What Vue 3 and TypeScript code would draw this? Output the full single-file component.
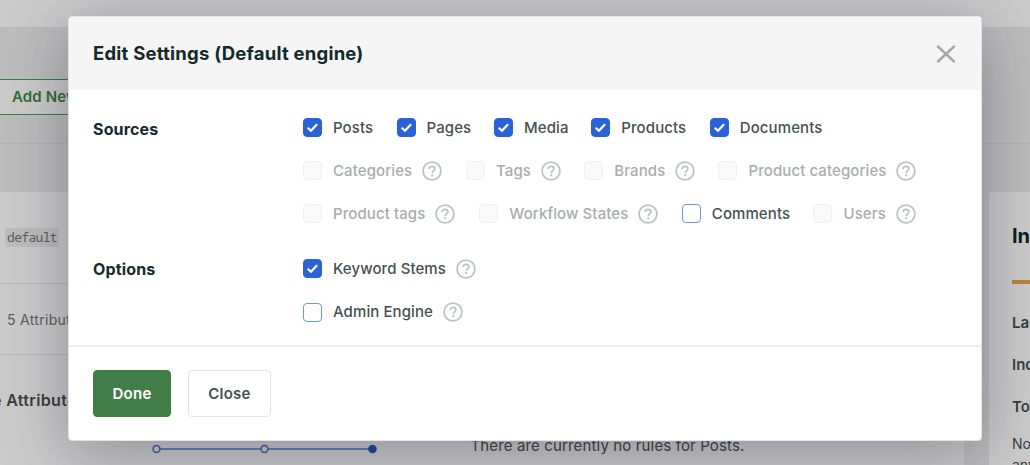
<script setup lang="ts">
interface Option {
  label: string
  checked?: boolean
  disabled?: boolean
  help?: boolean
  width: number
}

const sources: Option[][] = [
  [
    { label: 'Posts', checked: true, width: 93.5 },
    { label: 'Pages', checked: true, width: 97.5 },
    { label: 'Media', checked: true, width: 97.3 },
    { label: 'Products', checked: true, width: 118.5 },
    { label: 'Documents', checked: true, width: 120 },
  ],
  [
    { label: 'Categories', disabled: true, help: true, width: 163 },
    { label: 'Tags', disabled: true, help: true, width: 118.3 },
    { label: 'Brands', disabled: true, help: true, width: 134.2 },
    { label: 'Product categories', disabled: true, help: true, width: 200 },
  ],
  [
    { label: 'Product tags', disabled: true, help: true, width: 176.3 },
    { label: 'Workflow States', disabled: true, help: true, width: 202.5 },
    { label: 'Comments', width: 131.7 },
    { label: 'Users', disabled: true, help: true, width: 110 },
  ],
]

const options: Option[][] = [
  [{ label: 'Keyword Stems', checked: true, help: true, width: 200 }],
  [{ label: 'Admin Engine', help: true, width: 200 }],
]

const groups = [
  { title: 'Sources', rows: sources },
  { title: 'Options', rows: options },
]
</script>

<template>
  <div class="screen">
    <div class="page">
      <div class="topbar"></div>
      <div class="toolbar"><button class="add">Add New</button></div>
      <div class="columns">
        <main class="card engine">
          <div class="slug"><code>default</code></div>
          <div class="count">5 Attributes</div>
          <h3>e Attributes</h3>
          <div class="rules">
            <svg class="slider" width="226" height="12" viewBox="0 0 226 12" fill="none">
              <path d="M9 6H110M117 6H220" stroke="#4a68ac" stroke-width="1.7" />
              <circle cx="5.5" cy="6" r="3.4" stroke="#3c5ca3" stroke-width="1.5" />
              <circle cx="113.5" cy="6" r="3.4" stroke="#3c5ca3" stroke-width="1.5" />
              <circle cx="221.5" cy="6" r="4.3" fill="#204795" />
            </svg>
            <span>There are currently no rules for Posts.</span>
          </div>
        </main>
        <aside class="card stats">
          <h2>Index</h2>
          <div class="progress"></div>
          <b>Last</b>
          <b>Indexed</b>
          <b>Total</b>
          <p>Note<br />any</p>
        </aside>
      </div>
    </div>

    <section class="modal" role="dialog">
      <header>
        <h1>Edit Settings (Default engine)</h1>
        <svg class="dismiss" width="20" height="20" viewBox="0 0 20 20">
          <path d="M2 2.5L18 17.5M18 2.5L2 17.5" stroke="#a5a7a8" stroke-width="2.4" stroke-linecap="round" />
        </svg>
      </header>
      <div class="body">
        <div v-for="group in groups" :key="group.title" class="group">
          <h2>{{ group.title }}</h2>
          <div class="rows">
            <div v-for="(row, i) in group.rows" :key="i" class="row">
              <div
                v-for="item in row"
                :key="item.label"
                class="item"
                :class="{ disabled: item.disabled }"
                :style="{ width: item.width + 'px' }"
              >
                <span class="box" :class="{ checked: item.checked }">
                  <svg v-if="item.checked" width="19" height="19" viewBox="0 0 19 19" fill="none">
                    <path d="M4.7 9.8L7.9 12.7L14.1 6.3" stroke="#fff" stroke-width="2.2" />
                  </svg>
                </span>
                <span class="label">{{ item.label }}</span>
                <svg v-if="item.help" class="help" width="20" height="20" viewBox="0 0 20 20" fill="none">
                  <circle cx="10" cy="10" r="8.9" stroke="#bec3c1" stroke-width="1.8" />
                  <path
                    d="M7.1 8C7.1 6.2 8.3 5.3 10 5.3C11.7 5.3 12.9 6.3 12.9 7.8C12.9 9.5 10.3 9.8 10.3 12"
                    stroke="#bec3c1"
                    stroke-width="1.7"
                  />
                  <circle cx="10.2" cy="14.2" r="1.1" fill="#bec3c1" />
                </svg>
              </div>
            </div>
          </div>
        </div>
      </div>
      <footer>
        <button class="primary">Done</button>
        <button class="secondary">Close</button>
      </footer>
    </section>
  </div>
</template>

<style>
body {
  margin: 0;
  overflow: hidden;
}
</style>

<style scoped>
* {
  box-sizing: border-box;
}
h1, h2, h3, p {
  margin: 0;
}
.screen {
  position: relative;
  width: 1030px;
  height: 465px;
  overflow: hidden;
  font-family: Inter, 'Liberation Sans', sans-serif;
  color: #142a2b;
}
.page {
  height: 465px;
  overflow: hidden;
  background: #bdbdbd;
}
.topbar {
  height: 27px;
  background: #cbcbcb;
}
.toolbar {
  height: 117px;
  padding-top: 52px;
  border-bottom: 1px solid #b4b4b4;
}
.add {
  display: block;
  width: 120px;
  height: 36px;
  margin-left: -12px;
  padding: 0 0 1px 23px;
  border: 1px solid #437b45;
  background: #cbcbcb;
  color: #326c35;
  font: 600 15px Inter, sans-serif;
  letter-spacing: 0.15px;
  text-align: left;
}
.columns {
  display: flex;
  gap: 25px;
  padding-top: 48px;
}
.card {
  height: 290px;
  background: #cbcbcb;
  overflow: hidden;
  white-space: nowrap;
}
.engine {
  width: 964px;
}
.slug {
  height: 92px;
  padding: 36px 0 0 5px;
  border-bottom: 1px solid #b8b8b8;
}
.slug code {
  display: block;
  width: 54px;
  height: 19px;
  padding-left: 2px;
  background: #bdbdbd;
  color: #59605f;
  font: 13px/18px 'Noto Sans Mono', 'DejaVu Sans Mono', monospace;
  letter-spacing: -0.66px;
}
.count {
  height: 71px;
  padding-left: 7px;
  border-bottom: 1px solid #b8b8b8;
  color: #566060;
  font-size: 14px;
  letter-spacing: 0.3px;
  line-height: 71px;
}
.engine h3 {
  height: 81px;
  margin-left: -8px;
  padding-top: 35px;
  color: #344141;
  font-size: 16px;
  font-weight: 600;
  letter-spacing: 0.35px;
  line-height: 20px;
}
.rules {
  display: flex;
  align-items: center;
  padding-left: 151px;
  gap: 93.5px;
  color: #3b4444;
  font-size: 15px;
  letter-spacing: 0.14px;
  line-height: 20px;
}
.rules .slider {
  margin-top: 5px;
}
.stats {
  flex: 1;
  border-radius: 4px 0 0 0;
  padding: 31px 0 0 23px;
  color: #344141;
}
.stats h2 {
  height: 57px;
  color: #0c2023;
  font-size: 20px;
  line-height: 26px;
  font-weight: 700;
}
.progress {
  height: 4px;
  margin-bottom: 19px;
  background: #bd8534;
}
.stats b {
  display: block;
  height: 42px;
  font-size: 15px;
  font-weight: 600;
  line-height: 42px;
  margin: -1px 0 1px;
}
.stats p {
  font-size: 14px;
  line-height: 21px;
  margin-top: 5px;
}
.modal {
  position: absolute;
  top: 16px;
  left: 68px;
  width: 914px;
  height: 425px;
  border: 1px solid #e2e2e4;
  border-radius: 4px;
  background: #fff;
  overflow: hidden;
  box-shadow: 0 12px 64px rgba(20, 20, 48, 0.34);
}
header {
  display: flex;
  align-items: center;
  justify-content: space-between;
  height: 73px;
  padding: 0 25px 0 24px;
  background: #f5f5f5;
}
h1 {
  margin-top: -1px;
  font-size: 18.5px;
  font-weight: 700;
  letter-spacing: 0.22px;
  line-height: 24px;
}
.body {
  height: 257px;
  padding: 19px 0 0 24px;
  border-bottom: 2px solid #edefef;
}
.group {
  display: flex;
  margin-bottom: 12px;
}
.group h2 {
  width: 210px;
  padding-top: 8px;
  font-size: 16px;
  font-weight: 700;
  letter-spacing: 0.15px;
  line-height: 24px;
}
.group:last-child h2 {
  padding-top: 7px;
}
.rows {
  display: grid;
}
.row {
  display: flex;
  height: 43.1px;
}
.group:last-child .row {
  height: 43.6px;
}
.item {
  display: flex;
  align-items: center;
  height: 37px;
  color: #465150;
  font-size: 15px;
  font-weight: 500;
  letter-spacing: 0.09px;
  white-space: nowrap;
}
.label {
  margin-top: -1px;
}
.box {
  flex: none;
  width: 19px;
  height: 19px;
  margin-right: 11px;
  border: 1px solid #6d95e5;
  border-radius: 4px;
  background: #fff;
}
.box.checked {
  border-color: #2b63d5;
  background: #2b63d5;
}
.box svg {
  display: block;
  margin: -1px;
}
.disabled {
  color: #a7adac;
}
.disabled .box {
  border-color: #f0f1f1;
  background: #f9f9f9;
}
.help {
  flex: none;
  margin-left: 10px;
}
footer {
  display: flex;
  gap: 17px;
  padding: 23px 0 0 24px;
}
footer button {
  height: 47px;
  padding: 0;
  border: 1px solid #e3e5e5;
  border-radius: 4px;
  background: #fff;
  color: #465150;
  font: 600 15px Inter, sans-serif;
  letter-spacing: 0.25px;
}
footer .primary {
  width: 78px;
  border-color: #427e47;
  background: #427e47;
  color: #fff;
}
footer .secondary {
  width: 83px;
}
</style>
